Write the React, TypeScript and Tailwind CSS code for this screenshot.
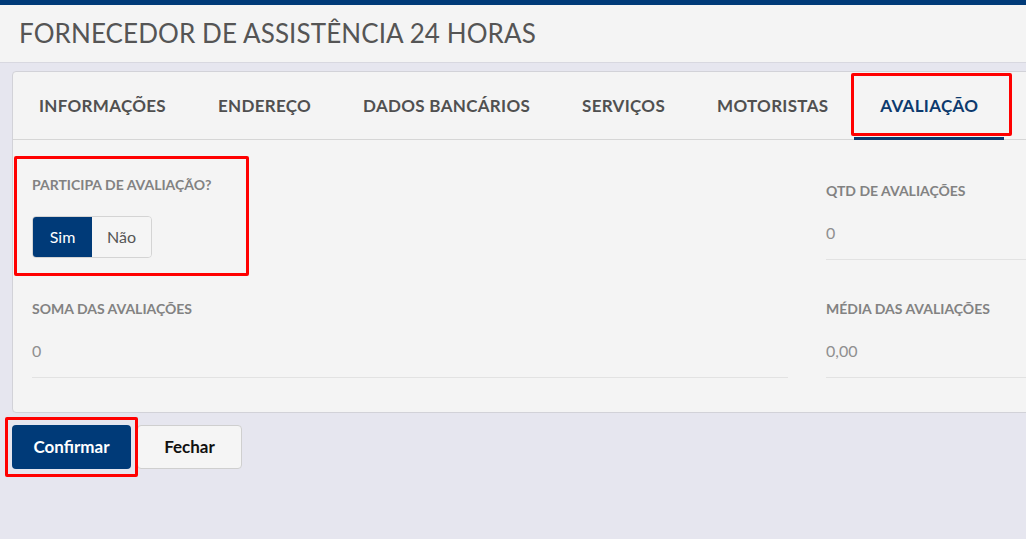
const tabs = ['INFORMAÇÕES', 'ENDEREÇO', 'DADOS BANCÁRIOS', 'SERVIÇOS', 'MOTORISTAS', 'AVALIAÇÃO']

const Field = ({ label, value, className = '' }: { label: string; value: string; className?: string }) => (
    <div className={className}>
        <div className="text-[14px] font-bold text-[#828282] leading-[18px]">{label}</div>
        <div className="mt-[24px] h-[36px] text-[16px] text-[#8f8f8f] leading-[18px] border-b border-[#e2e2e2]">{value}</div>
    </div>
)

const App = () => {
    return (
        <div className="relative w-[1026px] h-[539px] overflow-hidden bg-[#e6e6ef]" style={{ fontFamily: 'Lato, "Noto Sans", sans-serif' }}>
            <div className="h-[5px] bg-[#003a78]"/>
            <div className="h-[58px] bg-[#f4f4f4] border-b border-[#d8d8e0] flex items-center pl-[19px]">
                <h1 className="text-[26px] text-[#555] tracking-[0.1px]">FORNECEDOR DE ASSISTÊNCIA 24 HORAS</h1>
            </div>

            <div className="ml-3 mt-2 w-[1040px] h-[342px] bg-[#f4f4f4] border border-[#d2d2d8] rounded-[4px]">
                <div className="flex h-[68px] border-b border-[#d6d6d6]">
                    {tabs.map((t, i) => (
                        <div key={t}
                             className={`relative flex items-center px-[26px] text-[17px] font-bold tracking-[0.3px] ${i === 5 ? 'text-[#0c3a6e]' : 'text-[#505050]'}`}>
                            {t}
                            {i === 5 && <div className="absolute left-0 right-0 bottom-[-1px] h-[3px] bg-[#0c3a6e]"/>}
                        </div>
                    ))}
                </div>

                <div className="pl-[19px] grid grid-cols-[756px_200px] gap-x-[38px]">
                    <div className="pt-[36px]">
                        <div className="text-[14px] font-bold text-[#828282] leading-[18px]">PARTICIPA DE AVALIAÇÃO?</div>
                        <div className="mt-[22px] flex h-[42px] w-[120px] rounded-[4px] border border-[#d4d4d4] overflow-hidden text-[16px]">
                            <div className="w-[59px] bg-[#003a78] text-white flex items-center justify-center">Sim</div>
                            <div className="flex-1 bg-[#f5f5f5] text-[#555] flex items-center justify-center">Não</div>
                        </div>
                    </div>
                    <Field className="pt-[42px]" label="QTD DE AVALIAÇÕES" value="0"/>
                    <Field className="pt-[40px]" label="SOMA DAS AVALIAÇÕES" value="0"/>
                    <Field className="pt-[40px]" label="MÉDIA DAS AVALIAÇÕES" value="0,00"/>
                </div>
            </div>

            <div className="ml-3 mt-3 flex gap-[6px]">
                <button className="w-[119px] h-[44px] rounded-[4px] bg-[#003a78] text-white text-[17px] font-bold">Confirmar</button>
                <button className="w-[105px] h-[44px] rounded-[4px] bg-[#f5f5f5] border border-[#cfcfcf] text-[#111] text-[17px] font-bold">Fechar</button>
            </div>

            {/* destaques em vermelho */}
            <div className="absolute left-[851px] top-[73px] w-[161px] h-[63px] border-[3px] border-[#f00] rounded-[2px]"/>
            <div className="absolute left-[14px] top-[156px] w-[235px] h-[120px] border-[3px] border-[#f00] rounded-[2px]"/>
            <div className="absolute left-[5px] top-[417px] w-[133px] h-[60px] border-[3px] border-[#f00] rounded-[2px]"/>
        </div>
    )
}

export default App
